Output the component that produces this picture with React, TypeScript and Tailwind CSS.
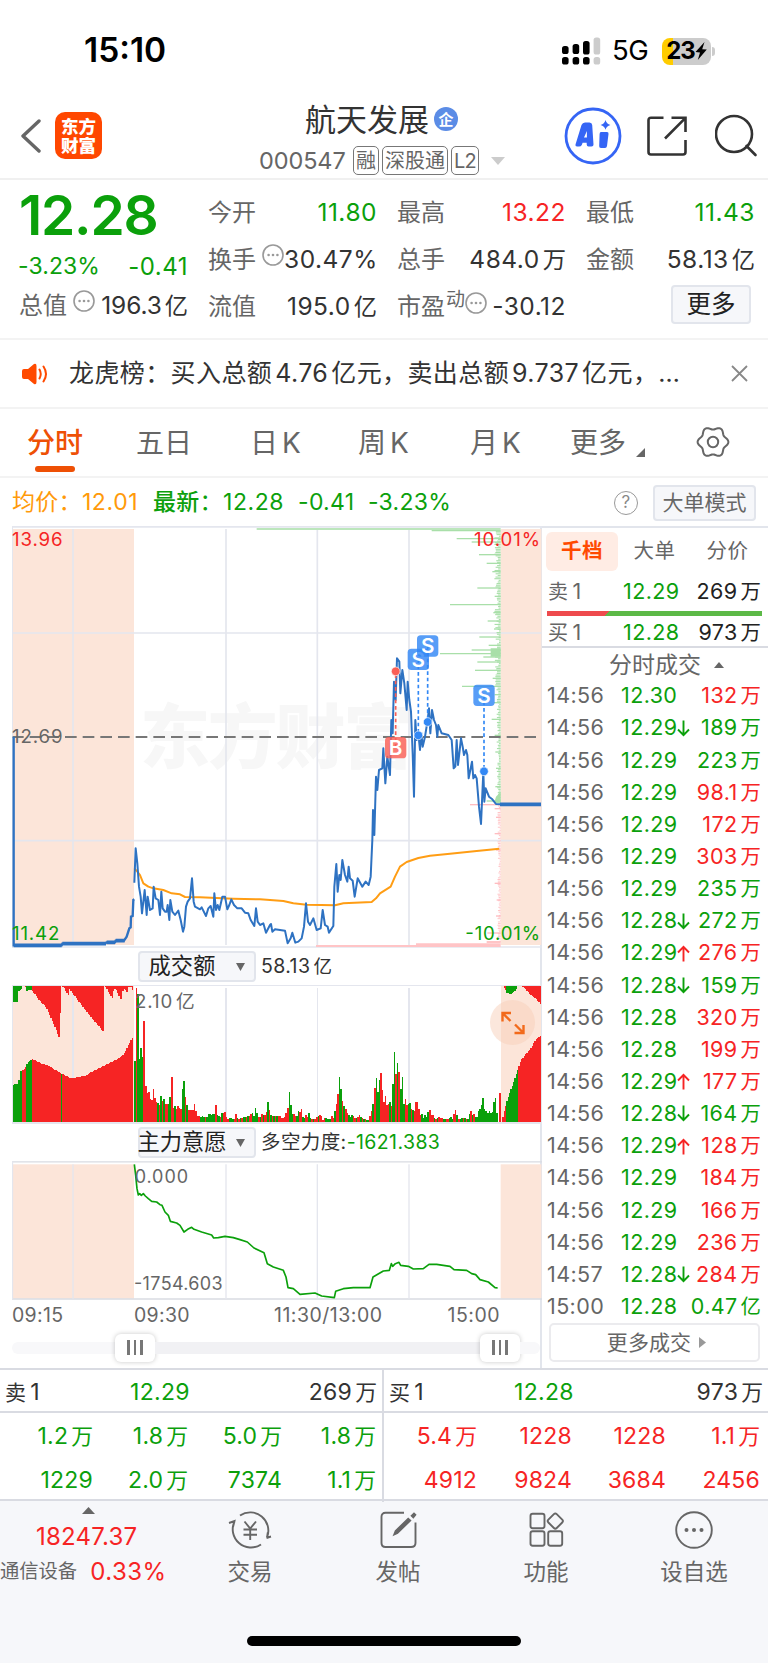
import React from 'react';

const GREEN = '#0ba00b';
const RED = '#f62424';

interface Trade {
  time: string;
  price: string;
  dir?: 'up' | 'down';
  amount: string;
  red?: boolean;
}

const trades: Trade[] = [
  { time: '14:56', price: '12.30', amount: '132万', red: true },
  { time: '14:56', price: '12.29', dir: 'down', amount: '189万' },
  { time: '14:56', price: '12.29', amount: '223万' },
  { time: '14:56', price: '12.29', amount: '98.1万', red: true },
  { time: '14:56', price: '12.29', amount: '172万', red: true },
  { time: '14:56', price: '12.29', amount: '303万', red: true },
  { time: '14:56', price: '12.29', amount: '235万' },
  { time: '14:56', price: '12.28', dir: 'down', amount: '272万' },
  { time: '14:56', price: '12.29', dir: 'up', amount: '276万', red: true },
  { time: '14:56', price: '12.28', dir: 'down', amount: '159万' },
  { time: '14:56', price: '12.28', amount: '320万', red: true },
  { time: '14:56', price: '12.28', amount: '199万', red: true },
  { time: '14:56', price: '12.29', dir: 'up', amount: '177万', red: true },
  { time: '14:56', price: '12.28', dir: 'down', amount: '164万' },
  { time: '14:56', price: '12.29', dir: 'up', amount: '128万', red: true },
  { time: '14:56', price: '12.29', amount: '184万', red: true },
  { time: '14:56', price: '12.29', amount: '166万', red: true },
  { time: '14:56', price: '12.29', amount: '236万', red: true },
  { time: '14:57', price: '12.28', dir: 'down', amount: '284万', red: true },
  { time: '15:00', price: '12.28', amount: '0.47亿' },
];

// Number followed by a CJK unit, with the small gap between them
function Amount({ value }: { value: string }) {
  const unit = /[万亿]$/.test(value) ? value.slice(-1) : '';
  const num = unit ? value.slice(0, -1) : value;
  return (
    <span className="whitespace-nowrap">
      {num}
      {unit && <span className="ml-[3px] text-[0.95em] tracking-normal">{unit}</span>}
    </span>
  );
}

function DotsIcon({ className = '' }: { className?: string }) {
  return (
    <svg className={`h-[22px] w-[22px] shrink-0 ${className}`} viewBox="0 0 22 22" fill="none">
      <circle cx="11" cy="11" r="10" stroke="#999" strokeWidth="1.6" />
      <circle cx="6.6" cy="11" r="1.3" fill="#999" />
      <circle cx="11" cy="11" r="1.3" fill="#999" />
      <circle cx="15.4" cy="11" r="1.3" fill="#999" />
    </svg>
  );
}

function StatusBar() {
  return (
    <div className="flex h-[102px] items-center justify-between pl-[84px] pr-[53px]">
      <div className="text-[33.5px] font-semibold leading-none text-black">15:10</div>
      <div className="flex items-center">
        <svg width="39" height="28" viewBox="0 0 39 28">
          <rect x="0" y="9" width="6.6" height="8" rx="2.6" />
          <rect x="0" y="20" width="6.6" height="7.5" rx="2.6" />
          <rect x="10.6" y="7" width="6.6" height="10" rx="2.6" />
          <rect x="10.6" y="20" width="6.6" height="7.5" rx="2.6" />
          <rect x="21" y="4" width="6.6" height="13.5" rx="2.6" />
          <rect x="21" y="20" width="6.6" height="7.5" rx="2.6" />
          <rect x="31.6" y="0.5" width="6.6" height="17" rx="2.6" fill="#ccc" />
          <rect x="31.6" y="20" width="6.6" height="7.5" rx="2.6" fill="#ccc" />
        </svg>
        <span className="ml-[11px] w-[37px] text-[27.5px] leading-none tracking-[-0.5px] text-black">5G</span>
        <div className="ml-[13px] flex h-[27px] w-[49px] items-center justify-center overflow-hidden rounded-[8px] bg-[linear-gradient(90deg,#ffcc00_23%,#ccc_23%)]">
          <span className="text-[24px] font-bold leading-none tracking-[-1px] text-black">23</span>
          <svg width="12" height="18" viewBox="0 0 12 18">
            <path d="M9.5 0 L0.5 10 L5 10.4 L2.8 18 L11.8 7.6 L7.2 7.2 Z" />
          </svg>
        </div>
        <div className="ml-[1px] h-[9px] w-[3px] rounded-r-full bg-[#ccc]" />
      </div>
    </div>
  );
}

function Header() {
  return (
    <div className="flex h-[78px] border-b-2 border-[#f0f0f0]">
      <div className="flex w-[258px] items-start pl-[20px] pt-[10px]">
        <svg className="mt-[7px]" width="22" height="34" viewBox="0 0 22 34" fill="none">
          <path d="M19 2 L3 17 L19 32" stroke="#666" strokeWidth="3.4" strokeLinecap="round" strokeLinejoin="round" />
        </svg>
        <div className="ml-[13px] flex h-[47px] w-[47px] flex-col items-center justify-center rounded-[10px] bg-[#ff4700] text-[17.5px] font-black leading-[19px] text-white">
          <span>东方</span>
          <span>财富</span>
        </div>
      </div>
      <div className="flex w-[260px] flex-col">
        <div className="flex h-[34px] items-center pl-[47px] text-[31px] leading-none text-[#333]">
          航天发展
          <span className="ml-[5px] flex h-[24px] w-[24px] items-center justify-center rounded-full bg-[#5b8ce6] text-[15px] font-bold text-white">企</span>
        </div>
        <div className="mt-[9px] flex h-[31px] items-center text-[#666]">
          <span className="w-[95px] pl-[1px] text-[23.5px] tracking-[-0.1px]">000547</span>
          <span className="flex h-[29px] w-[26px] items-center justify-center rounded-[5px] border border-[#777] text-[20px]">融</span>
          <span className="ml-[3px] flex h-[29px] w-[66px] items-center justify-center rounded-[5px] border border-[#777] text-[20px]">深股通</span>
          <span className="ml-[3px] flex h-[29px] w-[28px] items-center justify-center rounded-[5px] border border-[#777] text-[20px] tracking-[-0.8px]">L2</span>
          <svg className="ml-[12px]" width="14" height="8" viewBox="0 0 14 8">
            <path d="M0 0 H14 L7 8 Z" fill="#ccc" />
          </svg>
        </div>
      </div>
      <svg className="ml-[46px] mt-[5px]" width="58" height="58" viewBox="0 0 58 58" fill="none">
        <circle cx="29" cy="29" r="27" stroke="#3565f5" strokeWidth="2.8" />
        <path
          fillRule="evenodd"
          d="M11.5 37.5 L17.5 18 Q18.5 15.5 21 15.5 H25.5 Q28 15.5 28.2 18 L29.5 37.5 Q29.6 39.6 27.5 39.6 H24.5 Q22.8 39.6 22.7 37.6 V35.8 H18.6 L17.8 38 Q17 39.6 15 39.6 H13 Q11 39.6 11.5 37.5 Z M20 30.5 H22.9 V24 Z"
          fill="#3565f5"
        />
        <path d="M37 25 H43 Q44.8 25 44.5 27 L43 39 Q42.7 41 41 41 H37 Q35 41 35.2 39 L35.6 27 Q35.7 25 37 25 Z" fill="#3565f5" />
        <path d="M41.5 13 Q42.5 17 46.4 18 Q42.5 19 41.5 22.8 Q40.5 19 36.6 18 Q40.5 17 41.5 13 Z" fill="#3565f5" />
      </svg>
      <svg className="ml-[25px] mt-[14px]" width="40" height="40" viewBox="0 0 40 40" fill="none" stroke="#333" strokeWidth="2.6">
        <path d="M16.5 1.8 H4 Q1.5 1.8 1.5 4.3 V36 Q1.5 38.5 4 38.5 H36 Q38.5 38.5 38.5 36 V24" />
        <path d="M24.5 1.8 H38.5 V16 M38 2.3 L18 22.5" />
      </svg>
      <svg className="ml-[28px] mt-[12px]" width="44" height="44" viewBox="0 0 44 44" fill="none" stroke="#333" strokeWidth="2.6">
        <circle cx="19" cy="20" r="18" />
        <path d="M31.5 32 L40.5 41" strokeLinecap="round" />
      </svg>
    </div>
  );
}

interface QuoteItemProps {
  label: string;
  value: string;
  color?: string;
  sup?: string;
  dots?: boolean;
}

function QuoteItem({ label, value, color = 'text-[#333]', sup, dots }: QuoteItemProps) {
  return (
    <div className="flex h-[47px] items-center justify-between leading-none">
      <div className="flex shrink-0 items-center text-[24px] text-[#666]">
        {label}
        {sup && <span className="mb-[14px] ml-[1px] text-[19px]">{sup}</span>}
        {dots && <DotsIcon className={sup ? 'mb-[8px]' : 'mb-[10px] ml-[6px]'} />}
      </div>
      <div className={`text-[24.5px] ${color} ${value.startsWith('196') ? 'tracking-[-0.1px]' : 'tracking-[0.5px]'}`}>
        <Amount value={value} />
      </div>
    </div>
  );
}

function Quote() {
  return (
    <div className="grid h-[160px] grid-cols-[169px_169px_169px_169px] gap-x-[20px] border-b-2 border-[#f3f3f3] pl-[19px] text-[#666]">
      <div className="pt-[8px]">
        <div className="h-[54px] text-[55px] font-semibold leading-[54px] tracking-[-1.2px] text-[#0ba00b]">12.28</div>
        <div className="mt-[9px] flex h-[31px] items-center justify-between text-[23px] tracking-[0.1px] text-[#0ba00b]">
          <span className="-ml-[1px]">-3.23%</span>
          <span className="text-[24px] tracking-[0.5px]">-0.41</span>
        </div>
        <QuoteItem label="总值" value="196.3亿" dots />
      </div>
      <div className="pt-[9px]">
        <QuoteItem label="今开" value="11.80" color="text-[#0ba00b]" />
        <QuoteItem label="换手" value="30.47%" dots />
        <QuoteItem label="流值" value="195.0亿" />
      </div>
      <div className="pt-[9px]">
        <QuoteItem label="最高" value="13.22" color="text-[#f62424]" />
        <QuoteItem label="总手" value="484.0万" />
        <QuoteItem label="市盈" value="-30.12" sup="动" dots />
      </div>
      <div className="pt-[9px]">
        <QuoteItem label="最低" value="11.43" color="text-[#0ba00b]" />
        <QuoteItem label="金额" value="58.13亿" />
        <div className="mr-[4px] mt-[2px] flex justify-end">
          <button className="h-[39px] w-[80px] rounded-[4px] border-2 border-[#e2e5ec] bg-[#f6f7fa] text-[24.5px] leading-none text-[#222]">更多</button>
        </div>
      </div>
    </div>
  );
}

function Notice() {
  return (
    <div className="flex h-[69px] items-center border-b-2 border-[#f3f3f3] pl-[22px] pr-[20px]">
      <svg width="26" height="22" viewBox="0 0 26 22" fill="none">
        <path d="M2 6 H6 L12 1 Q14.5 0 14.5 3 V19 Q14.5 22 12 21 L6 16 H2 Q0 16 0 14 V8 Q0 6 2 6 Z" fill="#ff4a00" />
        <path d="M17.5 6.5 Q20 11 17.5 15.5 M21.5 3.5 Q26.5 11 21.5 18.5" stroke="#ff4a00" strokeWidth="2" strokeLinecap="round" />
      </svg>
      <div className="ml-[21px] whitespace-nowrap text-[25px] tracking-[0.4px] text-[#333]">
        龙虎榜：买入总额<span className="mx-[3px]">4.76</span>亿元，卖出总额<span className="mx-[3px]">9.737</span>亿元，<span className="font-['Inter']">…</span>
      </div>
      <svg className="ml-auto" width="17" height="17" viewBox="0 0 17 17" stroke="#888" strokeWidth="1.8">
        <path d="M1 1 L16 16 M16 1 L1 16" />
      </svg>
    </div>
  );
}

// Six-lobed outline of the settings icon, centred on 17,16
const gearPath =
  Array.from({ length: 72 }, (_, i) => {
    const a = (i * Math.PI) / 36;
    const r = 13.9 + 1.5 * Math.cos(6 * a);
    return `${i ? 'L' : 'M'}${(17 + r * Math.cos(a)).toFixed(2)} ${(16 + r * Math.sin(a)).toFixed(2)}`;
  }).join(' ') + ' Z';

function Tabs() {
  return (
    <div className="flex h-[69px] items-center border-b-2 border-[#f3f3f3] text-[28px] leading-none text-[#666]">
      <div className="flex h-full w-[109px] flex-col pl-[27px] pt-[20px] font-medium text-[#ee5005]">
        分时
        <span className="ml-[8px] mt-[9px] h-[6px] w-[40px] shrink-0 rounded-full bg-[#ee5005]" />
      </div>
      <div className="w-[111px] pl-[27px]">五日</div>
      <div className="w-[110px] pl-[30px]">日<span className="ml-[4px]">K</span></div>
      <div className="w-[110px] pl-[28px]">周<span className="ml-[4px]">K</span></div>
      <div className="w-[110px] pl-[30px]">月<span className="ml-[4px]">K</span></div>
      <div className="flex w-[126px] items-end pl-[20px]">
        更多
        <svg className="ml-[10px]" width="9" height="9" viewBox="0 0 9 9"><path d="M9 0 V9 H0 Z" fill="#666" /></svg>
      </div>
      <svg className="mb-[2px] ml-[20px]" width="34" height="32" viewBox="0 0 34 32" fill="none" stroke="#666" strokeWidth="2">
        <path d={gearPath} strokeLinejoin="round" />
        <circle cx="17" cy="16" r="5.2" />
      </svg>
    </div>
  );
}

function AverageRow() {
  return (
    <div className="flex h-[48px] items-center pl-[12px] pr-[12px] pt-[1px] text-[23px] tracking-[0.3px] text-[#0ba00b]">
      <span className="w-[141px] whitespace-nowrap text-[#ff9a0a]">均价：<span className="tracking-[0.6px]">12.01</span></span>
      <span className="w-[145px] whitespace-nowrap"><span className="font-medium">最新</span>：<span className="tracking-[0.6px]">12.28</span></span>
      <span className="w-[70px]">-0.41</span>
      <span>-3.23%</span>
      <span className="ml-auto flex h-[24px] w-[24px] items-center justify-center rounded-full border-[1.5px] border-[#999] text-[17px] text-[#888]">?</span>
      <button className="ml-[15px] h-[36px] w-[103px] rounded-[4px] border-2 border-[#e2e5ec] bg-[#f6f7fa] text-[21px] leading-none tracking-normal text-[#666]">大单模式</button>
    </div>
  );
}

// All chart coordinates use three units per pixel
const PRE_OPEN = '41,650 41,1276 185,1276 187,1271 315,1271 320,1267 345,1267 347,1262 372,1262 380,1250 388,1225 392,1222 393,1190 398,1188 400,1140 403,1138';
const PRICE =
  '403,1088 407,985 412,1030 417,1100 422,1130 426,1180 434,1110 440,1185 443,1130 450,1170 458,1165 461,1100 467,1135 475,1140 480,1185 484,1115 488,1165 495,1175 500,1175 503,1155 508,1200 511,1140 517,1175 525,1185 535,1172 542,1200 549,1235 553,1220 558,1160 563,1145 570,1135 576,1075 581,1145 585,1160 600,1168 605,1162 618,1188 625,1165 632,1158 640,1190 643,1120 648,1170 653,1155 658,1170 667,1130 675,1130 682,1168 688,1155 694,1138 702,1155 712,1165 725,1165 735,1178 745,1180 752,1200 763,1218 768,1165 773,1205 780,1215 790,1210 798,1238 810,1215 813,1212 817,1235 825,1228 855,1232 863,1270 872,1255 877,1238 886,1268 895,1265 905,1255 912,1220 918,1150 924,1205 930,1215 940,1195 950,1230 962,1225 968,1170 975,1215 983,1220 987,1238 1000,1218 1003,1100 1009,1032 1013,1115 1018,1065 1022,1080 1027,1020 1035,1065 1042,1085 1046,1040 1050,1075 1058,1082 1064,1130 1073,1075 1087,1100 1097,1085 1106,1095 1112,1070 1117,960 1119,870 1123,945 1128,770 1132,810 1137,750 1147,745 1150,685 1156,790 1162,710 1170,765 1174,600 1178,640 1182,485 1187,540 1191,415 1198,425 1201,520 1207,450 1213,490 1220,570 1223,485 1228,540 1233,575 1238,700 1242,830 1246,600 1250,660 1255,640 1260,690 1264,640 1268,680 1275,650 1283,600 1287,565 1291,640 1296,570 1302,600 1308,615 1312,650 1315,615 1325,640 1345,645 1355,660 1361,745 1366,740 1370,660 1374,735 1383,655 1388,680 1392,705 1398,690 1402,705 1406,775 1416,725 1420,775 1425,765 1430,775 1437,860 1443,912 1450,755 1453,845 1457,805 1467,830 1477,838 1488,852 1500,853';
const AVERAGE =
  '403,1045 412,1055 420,1065 430,1090 445,1100 460,1105 490,1110 515,1120 540,1123 555,1131 600,1132 700,1136 780,1138 850,1143 880,1150 920,1154 1005,1156 1030,1150 1115,1146 1128,1135 1140,1120 1172,1100 1185,1070 1200,1040 1220,1026 1255,1014 1290,1007 1350,1001 1430,993 1498,986';
const WILLING =
  '403,672 407,705 411,745 415,764 419,760 424,765 430,760 436,767 445,775 455,783 470,785 480,793 486,795 495,815 505,825 511,843 530,848 540,855 552,875 563,867 575,861 582,867 605,875 635,884 641,893 655,892 675,888 700,892 720,898 742,905 762,923 792,937 802,970 820,980 850,990 858,1010 864,1042 880,1045 900,1062 945,1058 965,1067 1003,1072 1007,1053 1030,1045 1060,1042 1110,1042 1119,1010 1150,992 1168,990 1174,970 1178,978 1186,970 1197,966 1202,975 1225,978 1240,986 1270,985 1287,972 1310,972 1350,978 1362,988 1400,990 1415,1000 1427,1003 1440,1018 1465,1025 1485,1042 1493,1043';

const rand = (i: number) => {
  const v = Math.sin(i * 127.1 + 11.7) * 43758.5453;
  return v - Math.floor(v);
};

const interpolate = (pts: number[][], x: number): number => {
  for (let i = 1; i < pts.length; i++) {
    if (x <= pts[i][0]) {
      const [x0, y0] = pts[i - 1];
      const [x1, y1] = pts[i];
      return y0 + ((y1 - y0) * (x - x0)) / (x1 - x0);
    }
  }
  return pts[pts.length - 1][1];
};

// Price distribution: [y, left edge]
const sellBars = [
  [32, 1295], [56, 1370], [66, 1415], [104, 1437], [130, 1460], [155, 1477], [204, 1432], [229, 1484], [254, 1350],
  [278, 1480], [303, 1463], [327, 1482], [351, 1438], [376, 1466], [390, 1415], [401, 1320], [411, 1450], [426, 1432],
  [451, 1425], [475, 1478], [499, 1386], [524, 1484], [548, 1482], [598, 1475], [646, 1484], [696, 1486], [745, 1488], [800, 1486], [843, 1460],
];
const buyBars = [[854, 1410], [866, 1484], [892, 1488], [941, 1484], [990, 1488], [1090, 1484], [1140, 1490], [1188, 1488], [1239, 1462]];

function Marker({ x, y, dotY, label }: { x: number; y: number; dotY: number; label: string }) {
  const color = label === 'B' ? '#fa5f55' : '#3288f5';
  return (
    <g>
      <line x1={x} y1={y} x2={x} y2={dotY} stroke={color} strokeWidth="5" strokeDasharray="11 8" />
      <circle cx={x} cy={dotY} r="13" fill={color} stroke="#fff" strokeWidth="2" />
      <rect x={x - 32} y={y - 32} width="64" height="64" rx="11" fill={color} fillOpacity="0.82" />
      <text x={x} y={y + 22} fontSize="62" fontWeight="600" fill="#fff" textAnchor="middle">{label}</text>
    </g>
  );
}

function PriceChart() {
  return (
    <svg className="block" width="530" height="422" viewBox="36 18 1590 1266" fill="none">
      <rect x="38" y="27" width="364" height="1248" fill="#fce5d9" />
      <rect x="1502" y="27" width="122" height="1248" fill="#fce5d9" />
      <text x="420" y="728" fontSize="210" fontWeight="900" fill="#f7f7f7" textLength="820">东方财富</text>
      <g stroke="#e4e6ee" strokeWidth="5">
        <path d="M36 20.5 H1626 M36 1281 H1626 M38 339 H1624 M38 962 H1624" />
        <path d="M219 27 V1275 M678 27 V1275 M952 27 V1275 M1227 27 V1275" />
        <path d="M37.5 18 V1284" strokeWidth="3" />
      </g>
      {/* distribution on the right edge */}
      <path d="M770 27 H1502" stroke="#bce6bc" strokeWidth="6" />
      {Array.from({ length: 166 }, (_, i) => (
        <line key={i} x1={1501 - 3 - rand(i) * (i < 100 ? 15 : 8)} y1={34 + i * 4.9} x2="1502" y2={34 + i * 4.9} stroke="#a9dfa9" strokeWidth="3.4" />
      ))}
      {sellBars.map(([y, x]) => <line key={y} x1={x} y1={y} x2="1502" y2={y} stroke="#a9dfa9" strokeWidth="4" />)}
      <path d="M1502 385 H1472 V410 H1502 Z M1502 815 L1488 830 L1482 850 H1502 Z" fill="#a9dfa9" />
      {Array.from({ length: 84 }, (_, i) => (
        <line key={i} x1={1500 - rand(i + 500) * 8} y1={858 + i * 4.9} x2="1502" y2={858 + i * 4.9} stroke="#ffc4c6" strokeWidth="3" />
      ))}
      {buyBars.map(([y, x]) => <line key={y} x1={x} y1={y} x2="1502" y2={y} stroke="#ffbcc0" strokeWidth="4" />)}
      <path d="M948 1278 H1502 M1248 1273 H1502 M1460 1266 H1502" stroke="#ffc4c6" strokeWidth="6" />

      <path d="M38 651 H1620" stroke="#777" strokeWidth="6" strokeDasharray="35 18" strokeDashoffset="2" />
      <polyline points={AVERAGE} stroke="#ff9d14" strokeWidth="6" strokeLinejoin="round" />
      <polyline points={PRE_OPEN} stroke="#2e72c2" strokeWidth="7" />
      <path d="M41 1276 H185 M187 1271 H318 M320 1267 H345 M347 1262 H374" stroke="#2e72c2" strokeWidth="11" />
      <polyline points={PRICE} stroke="#2e72c2" strokeWidth="6" strokeLinejoin="round" />
      <path d="M1500 853 H1623" stroke="#2e72c2" strokeWidth="11" />

      <Marker x={1187} y={683} dotY={454} label="B" />
      <Marker x={1255} y={418} dotY={646} label="S" />
      <Marker x={1283} y={378} dotY={606} label="S" />
      <Marker x={1452} y={526} dotY={754} label="S" />

      <g fontSize="56">
        <text x="36" y="77" fill={RED} textLength="152">13.96</text>
        <text x="36" y="669" fill="#666" textLength="152">12.69</text>
        <text x="36" y="1260" fill={GREEN} textLength="142">11.42</text>
        <text x="1422" y="77" fill={RED} textLength="198">10.01%</text>
        <text x="1396" y="1260" fill={GREEN} textLength="224">-10.01%</text>
      </g>
    </svg>
  );
}

const preBottom = [[38, 434], [54, 432], [57, 395], [72, 388], [80, 370], [95, 357], [120, 370], [140, 375], [165, 390], [180, 400], [212, 415], [255, 407], [280, 392], [310, 378], [345, 360], [370, 342], [385, 312], [396, 292]];
const preTop = [[38, 186], [53, 186], [55, 152], [64, 147], [66, 138], [74, 138], [78, 152], [93, 150], [120, 185], [137, 202], [160, 255], [178, 297], [180, 138], [188, 140], [204, 168], [207, 148], [216, 160], [260, 218], [309, 276], [311, 138], [316, 143], [336, 177], [340, 145], [347, 150], [362, 182], [368, 148], [374, 145], [378, 162], [382, 142], [390, 138], [396, 152]];
const postBottom = [[1507, 530], [1513, 505], [1520, 480], [1553, 385], [1557, 368], [1565, 355], [1590, 325], [1605, 300], [1620, 288]];
const postTop = [[1507, 138], [1512, 145], [1520, 160], [1532, 161], [1545, 152], [1550, 138], [1565, 138], [1575, 148], [1590, 165], [1605, 175], [1620, 193]];
const volume = [
  [403, 185], [409, 402], [414, 385], [418, 190], [423, 222], [428, 195], [432, 305], [436, 110], [446, 90], [451, 70], [459, 100], [468, 62], [473, 45], [482, 80], [491, 70], [500, 55], [509, 75], [514, 135], [518, 40], [530, 45], [538, 28], [545, 100], [550, 125], [556, 75], [561, 50], [570, 40], [577, 35], [583, 55], [590, 20], [620, 20], [640, 20], [646, 52], [652, 18], [665, 22], [670, 35], [680, 12], [700, 12], [706, 22], [715, 12], [740, 18], [752, 26], [760, 22], [765, 34], [775, 20], [795, 20], [801, 60], [808, 20], [850, 12], [860, 48], [866, 90], [870, 50], [875, 18], [885, 20], [893, 35], [902, 33], [910, 12], [925, 22], [940, 8], [952, 15], [956, 30], [965, 10], [975, 15], [990, 12], [1000, 20], [1006, 48], [1011, 85], [1017, 137], [1021, 100], [1026, 65], [1035, 50], [1043, 28], [1060, 15], [1080, 18], [1090, 8], [1105, 8], [1115, 35], [1121, 103], [1126, 133], [1130, 90], [1136, 128], [1140, 147], [1144, 98], [1149, 60], [1156, 80], [1162, 42], [1167, 62], [1172, 40], [1177, 115], [1181, 210], [1185, 145], [1190, 178], [1194, 150], [1198, 100], [1203, 135], [1208, 55], [1213, 70], [1222, 55], [1230, 40], [1240, 32], [1245, 62], [1251, 60], [1260, 25], [1270, 15], [1285, 27], [1293, 32], [1300, 12], [1330, 12], [1355, 12], [1367, 33], [1373, 12], [1400, 12], [1410, 28], [1425, 18], [1435, 30], [1445, 72], [1450, 35], [1460, 22], [1468, 40], [1475, 28], [1480, 60], [1486, 72], [1490, 5], [1495, 0],
];
const redSpikes = [409, 432, 459, 514, 646, 956, 1011, 1140, 1185, 1194, 1251, 1293, 1367];
const greenSpikes = [403, 414, 418, 423, 428, 482, 550, 545, 801, 866, 1017, 1126, 1136, 1181, 1190, 1203, 1445, 1486, 1480];

const volumeColor = (x: number, i: number): string => {
  if (redSpikes.some((s) => Math.abs(s - x) < 2.3)) return RED;
  if (greenSpikes.some((s) => Math.abs(s - x) < 2.3)) return GREEN;
  if (x > 436 && x < 470) return RED;
  if (x > 560 && x < 582) return RED;
  if (x > 1420) return GREEN;
  return rand(i + 40) > 0.48 ? GREEN : RED;
};

// Spikes keep their exact height, the rest follows the envelope
const volumeHeight = (x: number, i: number): number => {
  const spike = volume.find(([vx, vh]) => vh > 50 && Math.abs(vx - x) < 2.3);
  if (spike) return spike[1];
  const base = interpolate(volume, x);
  return base < 60 ? base * (0.7 + rand(i) * 0.6) : base * 0.85;
};

const preColor = (x: number) => (x < 64 || (x > 76 && x < 94) || (x > 179 && x < 184) ? GREEN : RED);
const postColor = (x: number) => (x > 1515 && x < 1552 ? GREEN : RED);

function VolumeChart() {
  return (
    <svg className="block" width="530" height="139" viewBox="36 135 1590 417" shapeRendering="crispEdges">
      <rect x="38" y="138" width="364" height="410" fill="#fce5d9" />
      <rect x="1502" y="138" width="122" height="410" fill="#fce5d9" />
      <path d="M36 137 H1626 M36 549 H1626 M219 145 V547 M678 145 V547 M952 145 V547 M1227 145 V547 M37.5 135 V550" stroke="#e4e6ee" strokeWidth="4" />
      {Array.from({ length: 90 }, (_, i) => 39 + i * 4).map((x) => (
        <g key={x} fill={preColor(x)}>
          <rect x={x} y="138" width="4.1" height={Math.max(0, interpolate(preTop, x) - 138)} />
          <rect x={x} y={interpolate(preBottom, x)} width="4.1" height={547 - interpolate(preBottom, x)} />
        </g>
      ))}
      {Array.from({ length: 29 }, (_, i) => 1507 + i * 4).map((x) => (
        <g key={x} fill={postColor(x)}>
          <rect x={x} y="138" width="4.1" height={Math.max(0, interpolate(postTop, x) - 138)} />
          <rect x={x} y={interpolate(postBottom, x)} width="4.1" height={547 - interpolate(postBottom, x)} />
        </g>
      ))}
      {Array.from({ length: 238 }, (_, i) => 403 + i * 4.58).map((x, i) => {
        const h = volumeHeight(x, i);
        return <rect key={i} x={x} y={547 - h} width="4.6" height={h} fill={volumeColor(x, i)} />;
      })}
      <rect x="1498" y="458" width="5" height="89" fill={RED} />
      <text x="405" y="203" fontSize="56" fill="#666" textLength="112">2.10</text>
      <text x="528" y="203" fontSize="56" fill="#666">亿</text>
    </svg>
  );
}

function WillingChart() {
  return (
    <svg className="block" width="530" height="139" viewBox="36 662 1590 417" fill="none">
      <rect x="38" y="672" width="364" height="403" fill="#fce5d9" />
      <rect x="1502" y="672" width="122" height="403" fill="#fce5d9" />
      <path d="M36 664.5 H1626 M36 1076 H1626" stroke="#d9dbe2" strokeWidth="4" />
      <path d="M219 672 V1075 M678 672 V1075 M952 672 V1075 M1227 672 V1075 M37.5 663 V1077" stroke="#e4e6ee" strokeWidth="4" />
      <polyline points={WILLING} stroke={GREEN} strokeWidth="5" strokeLinejoin="round" />
      <g fontSize="54" fill="#666">
        <text x="404" y="728" textLength="160">0.000</text>
        <text x="402" y="1048" textLength="266">-1754.603</text>
      </g>
    </svg>
  );
}

function IndicatorSelect({ name, children }: { name: string; children: React.ReactNode }) {
  return (
    <div className="flex h-full items-center pl-[126px]">
      <div className="flex h-[31px] w-[118px] items-center justify-between rounded-[4px] border-2 border-[#e2e5ec] bg-[#f6f7fa] pr-[9px] leading-none text-[#222]">
        <span className="flex w-[84px] justify-center whitespace-nowrap text-[22.3px]">{name}</span>
        <svg width="9" height="8" viewBox="0 0 9 8"><path d="M0 0 H9 L4.5 8 Z" fill="#666" /></svg>
      </div>
      <div className="ml-[5px] whitespace-nowrap text-[19.5px] tracking-[0.4px] text-[#333]">{children}</div>
    </div>
  );
}

function SliderHandle() {
  return (
    <div className="flex h-[28px] w-[40px] items-center justify-center gap-[4px] rounded-[6px] bg-white shadow-[0_0_5px_rgba(0,0,0,0.22)]">
      <span className="h-[15px] w-[2.5px] bg-[#777]" />
      <span className="h-[15px] w-[2.5px] bg-[#777]" />
      <span className="h-[15px] w-[2.5px] bg-[#777]" />
    </div>
  );
}

function Charts() {
  return (
    <div className="w-[542px] border-r-2 border-[#e2e5ec] pl-[12px]">
      <PriceChart />
      <div className="h-[37px]">
        <IndicatorSelect name="成交额"><Amount value="58.13亿" /></IndicatorSelect>
      </div>
      <div className="relative">
        <VolumeChart />
        <div className="absolute left-[478px] top-[15px] flex h-[45px] w-[45px] items-center justify-center rounded-full bg-[#f8cfba]/50">
          <svg width="24" height="24" viewBox="0 0 24 24" fill="none" stroke="#f26a1b" strokeWidth="2.4">
            <path d="M1.5 10.5 V2 H10 M2 2.5 L9.5 10 M13.5 22 H22.5 V14 M22 21.5 L14 13.5" />
          </svg>
        </div>
      </div>
      <div className="h-[37px]">
        <IndicatorSelect name="主力意愿">多空力度:<span className="text-[#0ba00b]">-1621.383</span></IndicatorSelect>
      </div>
      <WillingChart />
      <div className="flex h-[31px] items-center text-[19.5px] text-[#666]">
        <span className="w-[122px] tracking-[0.3px]">09:15</span>
        <span className="w-[140px] tracking-[0.3px]">09:30</span>
        <span className="tracking-[0.5px]">11:30/13:00</span>
        <span className="ml-auto pr-[40px] tracking-[0.5px]">15:00</span>
      </div>
      <div className="flex h-[33px] items-center">
        <div className="h-[12px] w-[103px] rounded-l-full bg-[#f8f8fa]" />
        <SliderHandle />
        <div className="h-[12px] flex-1 bg-[#f1f1f4]" />
        <SliderHandle />
        <div className="h-[12px] w-[20px] rounded-r-full bg-[#f8f8fa]" />
      </div>
    </div>
  );
}

function Arrow({ dir }: { dir: 'up' | 'down' }) {
  return (
    <svg width="13" height="17" viewBox="0 0 13 17" fill="none" stroke={dir === 'up' ? RED : GREEN} strokeWidth="1.9">
      {dir === 'up' ? <path d="M6.5 16.5 V2 M1 7.5 L6.5 1.8 L12 7.5" /> : <path d="M6.5 0.5 V15 M1 9.5 L6.5 15.2 L12 9.5" />}
    </svg>
  );
}

function TradePanel() {
  return (
    <div className="flex-1 border-t-2 border-[#e2e5ec] pl-[4px] text-[21.5px] leading-none tracking-[0.4px] text-[#666]">
      <div className="flex h-[46px] items-center text-[20.5px]">
        <span className="flex h-[39px] w-[72px] items-center justify-center rounded-[6px] bg-[#ffece4] font-bold text-[#ff4a00]">千档</span>
        <span className="w-[73px] text-center">大单</span>
        <span className="w-[73px] text-center">分价</span>
      </div>
      <div className="flex h-[36px] items-center pl-[2px] pr-[7px]">
        <span className="w-[75px] text-[20px]">卖<span className="ml-[4px] text-[21.5px]">1</span></span>
        <span className="text-[#0ba00b]">12.29</span>
        <span className="ml-auto text-[#222]"><Amount value="269万" /></span>
      </div>
      <div className="ml-[1px] mr-[6px] mt-[1px] h-[5px] bg-[linear-gradient(135deg,#ee4a4d_28.5%,#5cb947_28.5%)]" />
      <div className="-ml-[4px] flex h-[32px] items-center border-b-2 border-[#d9dbe2] pl-[6px] pr-[7px] pt-[3px]">
        <span className="w-[75px] text-[20px]">买<span className="ml-[4px] text-[21.5px]">1</span></span>
        <span className="text-[#0ba00b]">12.28</span>
        <span className="ml-auto text-[#222]"><Amount value="973万" /></span>
      </div>
      <div className="flex h-[32px] items-center pl-[63px] pt-[2px] text-[23px] tracking-normal">
        分时成交
        <svg className="ml-[13px]" width="10" height="6" viewBox="0 0 10 6"><path d="M0 6 H10 L5 0 Z" fill="#666" /></svg>
      </div>
      {trades.map((t, i) => (
        <div key={i} className="flex h-[32.15px] items-center pl-[1px] pr-[7px]">
          <span className="w-[74px]">{t.time}</span>
          <span className="w-[56px] text-[#0ba00b]">{t.price}</span>
          {t.dir && <Arrow dir={t.dir} />}
          <span className={`ml-auto ${t.red ? 'text-[#f62424]' : 'text-[#0ba00b]'}`}><Amount value={t.amount} /></span>
        </div>
      ))}
      <div className="ml-[3px] flex h-[39px] w-[211px] items-center justify-center rounded-[5px] border-2 border-[#ebebee] pl-[4px] text-[21px] tracking-[0.1px]">
        更多成交
        <svg className="ml-[8px]" width="7" height="11" viewBox="0 0 7 11"><path d="M0 0 V11 L7 5.5 Z" fill="#999" /></svg>
      </div>
    </div>
  );
}

interface QueueProps {
  side: string;
  price: string;
  amount: string;
  orders: string[];
  color: string;
}

function Queue({ side, price, amount, orders, color }: QueueProps) {
  return (
    <div>
      <div className="flex h-[43px] items-center border-b-2 border-[#d9dbe2] pl-[5px] pt-[3px] text-[23px] tracking-[0.3px] text-[#333]">
        <span className="w-[125px] text-[21px]">{side}<span className="ml-[4px] text-[23px]">1</span></span>
        <span className="text-[#0ba00b]">{price}</span>
        <span className="ml-auto pr-[5px]"><Amount value={amount} /></span>
      </div>
      <div className={`grid grid-cols-[93px_95px_94px_94px] pt-[2px] text-right text-[23px] leading-[43.5px] tracking-[0.2px] ${color}`}>
        {orders.map((o, i) => <Amount key={i} value={o} />)}
      </div>
    </div>
  );
}

function OrderQueues() {
  return (
    <div className="grid h-[133px] grid-cols-[384px_384px] border-b-2 border-t-2 border-[#d9dbe2]">
      <div className="border-r-2 border-[#d9dbe2]">
        <Queue side="卖" price="12.29" amount="269万" color="text-[#0ba00b]" orders={['1.2万', '1.8万', '5.0万', '1.8万', '1229', '2.0万', '7374', '1.1万']} />
      </div>
      <Queue side="买" price="12.28" amount="973万" color="text-[#f62424]" orders={['5.4万', '1228', '1228', '1.1万', '4912', '9824', '3684', '2456']} />
    </div>
  );
}

function NavItem({ label, children }: { label: string; children: React.ReactNode }) {
  return (
    <div className="flex w-[148px] flex-col items-center pt-[7px]">
      <svg width="44" height="44" viewBox="0 0 44 44" fill="none" stroke="#666" strokeWidth="1.9">{children}</svg>
      <span className="mt-[8px] text-[22.5px] leading-[24px] text-[#666]">{label}</span>
    </div>
  );
}

function BottomBar() {
  return (
    <div className="flex h-[162px] flex-col bg-[#f6f7fa]">
      <div className="flex flex-1">
        <div className="flex w-[176px] flex-col pt-[6px] leading-none">
          <svg className="ml-[82px]" width="13" height="7" viewBox="0 0 13 7"><path d="M0 7 H13 L6.5 0 Z" fill="#666" /></svg>
          <span className="mt-[11px] pl-[36px] text-[24px] tracking-[0.2px] text-[#f62424]">18247.37</span>
          <div className="mt-[11px] flex items-center whitespace-nowrap text-[19.3px] text-[#666]">
            通信设备
            <span className="ml-[13px] text-[24px] tracking-[0.5px] text-[#f62424]">0.33%</span>
          </div>
        </div>
        <NavItem label="交易">
          <path d="M12 7.5 A18.2 18.2 0 0 1 39 29.5 M38.5 30 L43 28.5 M39 30 L39.8 24.5 M33 36.5 A18.2 18.2 0 0 1 6.5 13.5 M1 15 L6.5 13 L5 19" />
          <path d="M16.5 13.5 L22.2 20.5 L28 13.5 M22.2 20.5 V32 M15.5 21.5 H29 M15.5 26.8 H29" />
        </NavItem>
        <NavItem label="发帖">
          <path d="M28 4.8 H9.5 Q5.5 4.8 5.5 8.8 V35 Q5.5 39 9.5 39 H35 Q39.5 39 39.5 35 V14.5" />
          <path d="M18 26.8 L19.5 23 L32.2 10.5 L34.4 12.5 L21.5 25.2 Z M35.5 7.8 L38 5.4 L39.5 6.8 L37.3 9.6 Z" fill="#666" strokeWidth="1.6" />
        </NavItem>
        <NavItem label="功能">
          <rect x="6.5" y="5.8" width="14" height="14.5" rx="2.2" />
          <rect x="6.5" y="23.3" width="14" height="14.5" rx="2.2" />
          <rect x="24.2" y="23.3" width="14" height="14.5" rx="2.2" />
          <rect x="25.4" y="7.2" width="11.8" height="11.8" rx="2" transform="rotate(45 31.3 13.1)" />
        </NavItem>
        <NavItem label="设自选">
          <circle cx="22" cy="22" r="17.8" />
          <g fill="#666" stroke="none">
            <circle cx="14.5" cy="22" r="2" />
            <circle cx="22" cy="22" r="2" />
            <circle cx="29.5" cy="22" r="2" />
          </g>
        </NavItem>
      </div>
      <div className="mb-[17px] ml-[247px] h-[10px] w-[274px] rounded-full bg-black" />
    </div>
  );
}

export default function App() {
  return (
    <div className="w-[768px] overflow-hidden bg-white font-['Inter','Noto_Sans_CJK_SC',sans-serif]">
      <StatusBar />
      <Header />
      <Quote />
      <Notice />
      <Tabs />
      <AverageRow />
      <div className="flex h-[842px]">
        <Charts />
        <TradePanel />
      </div>
      <OrderQueues />
      <BottomBar />
    </div>
  );
}
